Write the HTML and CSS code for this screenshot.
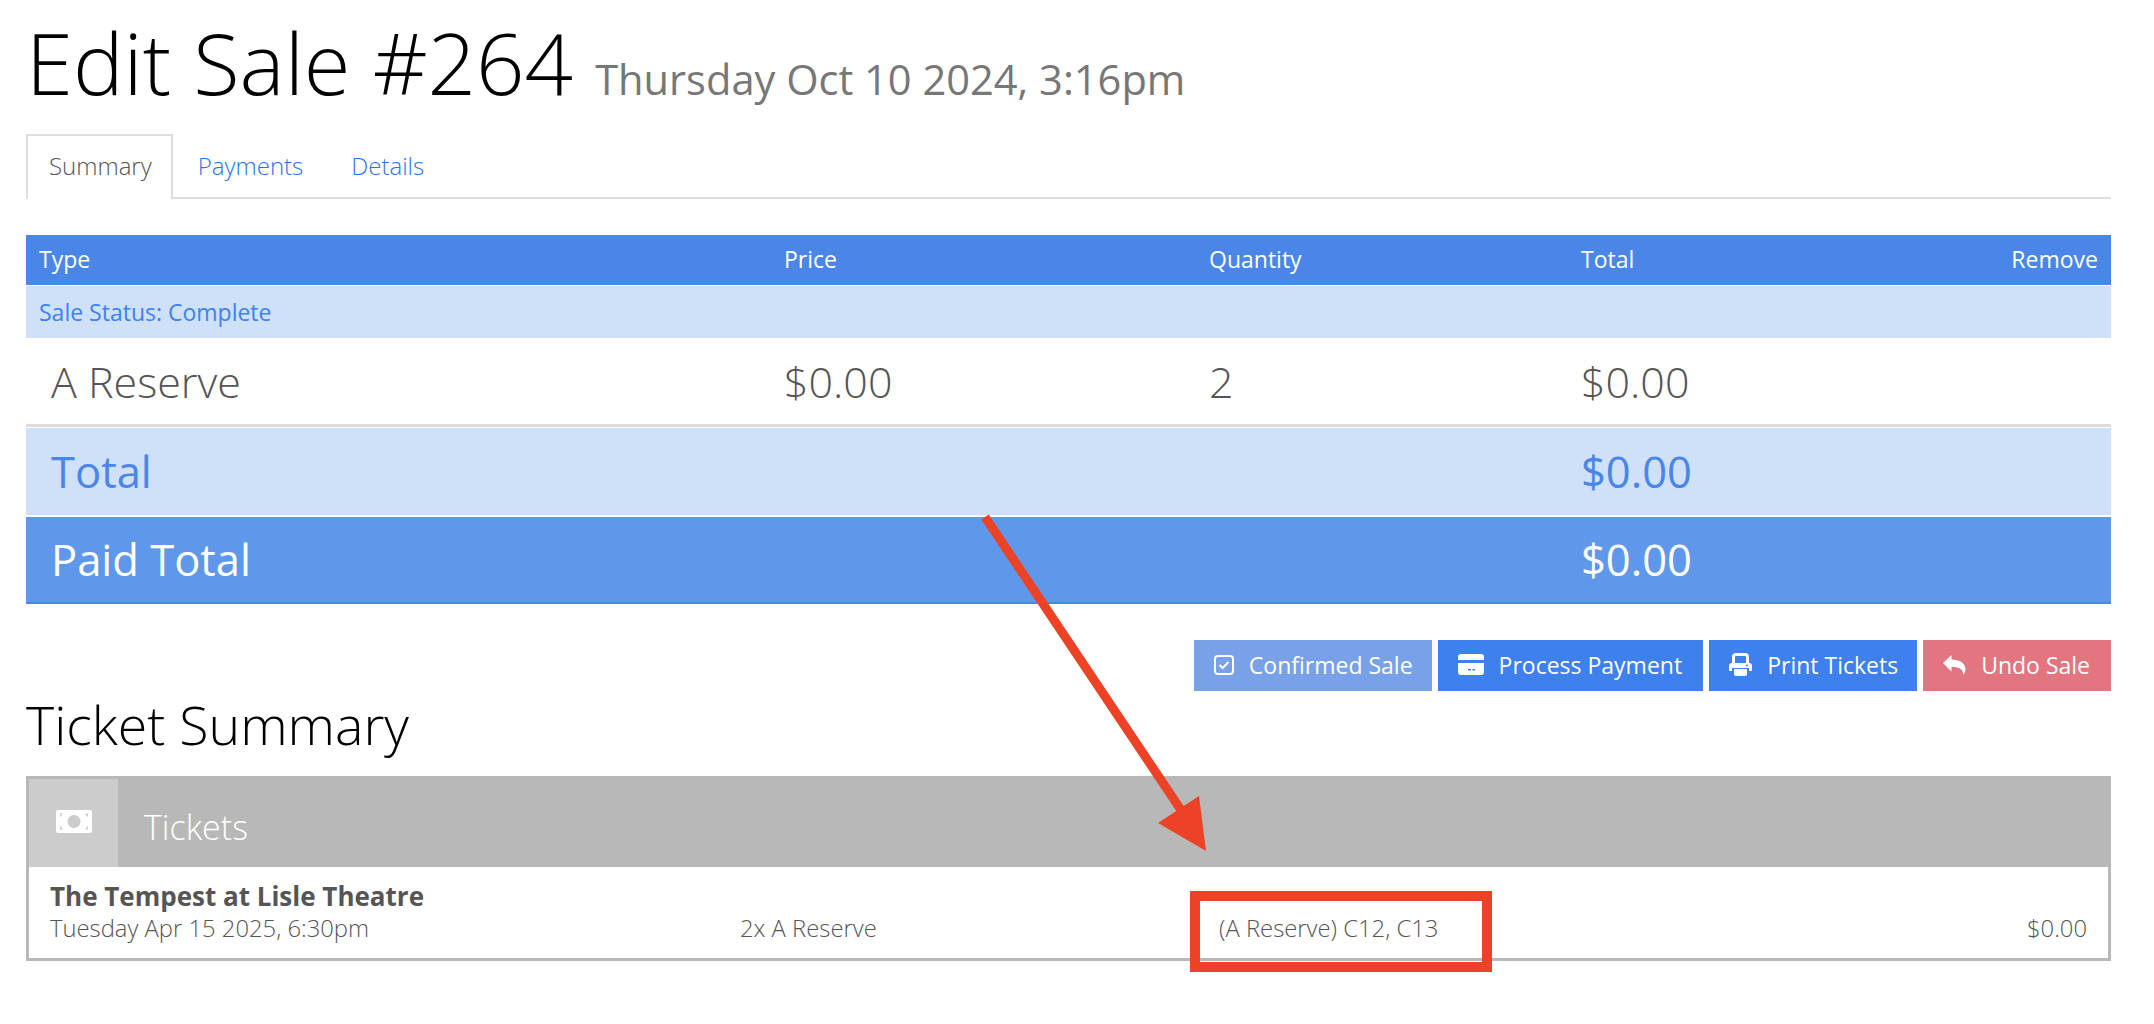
FILE: index.html
```html
<!DOCTYPE html>
<html lang="en">
<head>
    <meta charset="UTF-8">
    <title>Edit Sale #264</title>
    <link rel="stylesheet" href="styles.css">
</head>
<body>
    <div class="page">
        <h1>Edit Sale #264 <small>Thursday Oct 10 2024, 3:16pm</small></h1>

        <ul class="tabs">
            <li class="active"><a>Summary</a></li>
            <li><a>Payments</a></li>
            <li><a>Details</a></li>
        </ul>

        <table class="sale-table">
            <thead>
                <tr>
                    <th class="col-type">Type</th>
                    <th class="col-price">Price</th>
                    <th class="col-qty">Quantity</th>
                    <th class="col-total">Total</th>
                    <th class="col-remove">Remove</th>
                </tr>
            </thead>
            <tbody>
                <tr class="status-row"><td colspan="5">Sale Status: Complete</td></tr>
                <tr class="item-row">
                    <td class="first">A Reserve</td>
                    <td>$0.00</td>
                    <td>2</td>
                    <td>$0.00</td>
                    <td></td>
                </tr>
                <tr class="total-row">
                    <td class="first">Total</td>
                    <td></td>
                    <td></td>
                    <td>$0.00</td>
                    <td></td>
                </tr>
                <tr class="paid-row">
                    <td class="first">Paid Total</td>
                    <td></td>
                    <td></td>
                    <td>$0.00</td>
                    <td></td>
                </tr>
            </tbody>
        </table>

        <div class="actions">
            <a class="btn btn-confirmed">
                <svg class="btn-icon" width="20" height="20" viewBox="0 0 20 20"><rect x="1" y="1" width="18" height="18" rx="3" fill="none" stroke="#fff" stroke-width="2"/><path d="M5.500 10l3.200 3 5.800-6" fill="none" stroke="#fff" stroke-width="2"/></svg>
                Confirmed Sale
            </a>
            <a class="btn btn-primary">
                <svg class="btn-icon" width="26" height="21" viewBox="0 0 26 21"><path d="M3 0h20a3 3 0 0 1 3 3v3H0V3a3 3 0 0 1 3-3zM0 9h26v9a3 3 0 0 1-3 3H3a3 3 0 0 1-3-3zM10 15v1.500h3V15zm4.500 0v1.500H17V15z" fill="#fff" fill-rule="evenodd"/></svg>
                Process Payment
            </a>
            <a class="btn btn-primary btn-print">
                <svg class="btn-icon" width="23" height="23" viewBox="0 0 23 23"><path d="M3 10V4a4 4 0 0 1 4-4h9a4 4 0 0 1 4 4v6h-3V4a1 1 0 0 0-1-1H7a1 1 0 0 0-1 1v6zM3 10h17a3 3 0 0 1 3 3v4a1 1 0 0 1-1 1h-2v-3H3v3H1a1 1 0 0 1-1-1v-4a3 3 0 0 1 3-3zM5 16h13v5a2 2 0 0 1-2 2H7a2 2 0 0 1-2-2z" fill="#fff" fill-rule="evenodd"/><circle cx="18" cy="12.500" r="1" fill="#3d80ee"/></svg>
                Print Tickets
            </a>
            <a class="btn btn-undo">
                <svg class="btn-icon" width="23" height="20" viewBox="0 0 23 20"><path d="M0 8L8.500 0v4.500c8 .2 14 3.500 14 9.500 0 2.500-1 4.500-2.500 6 .8-5.500-3.500-8-11.500-8v4.500z" fill="#fff"/></svg>
                Undo Sale
            </a>
        </div>

        <h2>Ticket Summary</h2>

        <div class="panel">
            <div class="panel-head">
                <div class="panel-icon">
                    <svg width="36" height="23" viewBox="0 0 36 23"><path fill-rule="evenodd" fill="#fff" d="M2 0h32a2 2 0 0 1 2 2v19a2 2 0 0 1-2 2H2a2 2 0 0 1-2-2V2a2 2 0 0 1 2-2zm15 5a6.500 6.500 0 1 0 2 0zM4 3.500v4l3-4zm28 0h-3l3 4zM4 19.500h3l-3-4zm28 0v-4l-3 4z"/></svg>
                </div>
                <div class="panel-title">Tickets</div>
            </div>
            <div class="ticket-row">
                <div class="ticket-show">
                    <strong>The Tempest at Lisle Theatre</strong>
                    <span>Tuesday Apr 15 2025, 6:30pm</span>
                </div>
                <div class="ticket-qty">2x A Reserve</div>
                <div class="ticket-seats">(A Reserve) C12, C13</div>
                <div class="ticket-price">$0.00</div>
            </div>
        </div>
    </div>

    <!-- annotation drawn over the screenshot -->
    <svg class="annotation" width="2154" height="1024" viewBox="0 0 2154 1024">
        <path d="M985 517L1183 813" stroke="#ec4226" stroke-width="9" fill="none"/>
        <path d="M1199 796L1206 851L1158 823z" fill="#ec4226"/>
        <rect x="1195" y="896" width="292" height="71" fill="none" stroke="#ec4226" stroke-width="10"/>
    </svg>
</body>
</html>
```

FILE: styles.css
```css
body {
    font-family: "Open Sans", sans-serif;
    font-weight: 300;
    margin: 0;
    padding: 0;
    background-color: #fff;
    color: #555;
}

.page {
    width: 2085px;
    margin-left: 26px;
}

h1 {
    margin: 0;
    height: 134px;
    font-size: 85px;
    line-height: 124px;
    font-weight: 300;
    color: #000;
    white-space: nowrap;
}

h1 small {
    font-size: 41.600px;
    font-weight: 400;
    color: #777;
}

.tabs {
    list-style-type: none;
    margin: 0;
    padding: 0;
    height: 63px;
    display: flex;
    border-bottom: 2px solid #ddd;
}

.tabs li {
    height: 63px;
    box-sizing: border-box;
    padding: 0 22px;
    font-size: 24px;
    line-height: 64px;
    color: #2a73ec;
}

.tabs li:nth-child(2) {
    padding-left: 25px;
}

.tabs li:nth-child(3) {
    padding-left: 26px;
}

.tabs li.active {
    height: 65px;
    padding: 0 19px 0 21px;
    line-height: 59px;
    color: #555;
    background-color: #fff;
    border: 2px solid #ddd;
    border-bottom: none;
}

.sale-table {
    width: 100%;
    margin-top: 36px;
    border-collapse: separate;
    border-spacing: 0;
    table-layout: fixed;
}

.sale-table th {
    height: 50px;
    padding: 0 13px 2px;
    box-sizing: border-box;
    font-size: 23px;
    font-weight: 400;
    text-align: left;
    color: #fff;
    background-color: #4a86e8;
}

.col-type { width: 745px; }
.col-price { width: 425px; }
.col-qty { width: 372px; }
.col-total { width: 326px; }

.sale-table th.col-remove {
    text-align: right;
}

.sale-table td {
    padding: 0 13px;
    box-sizing: border-box;
}

.sale-table td.first {
    padding-left: 25px;
}

.status-row td {
    height: 53px;
    font-size: 23px;
    font-weight: 400;
    color: #3d82ee;
    background-color: #cfe0f9;
    border-top: 1px solid #fff;
}

.item-row td {
    height: 89px;
    font-size: 43px;
    border-bottom: 3px solid #ddd;
}

.total-row td {
    height: 90px;
    font-size: 43.500px;
    font-weight: 400;
    color: #4a86e8;
    background-color: #cfe0f9;
    border-top: 1px solid #fff;
    border-bottom: 2px solid #fff;
}

.paid-row td {
    height: 87px;
    font-size: 43.500px;
    font-weight: 400;
    color: #fff;
    background-color: #5f98ea;
    border-bottom: 2px solid #4a86e8;
}

.actions {
    display: flex;
    justify-content: flex-end;
    gap: 6px;
    margin-top: 36px;
}

.btn {
    height: 51px;
    box-sizing: border-box;
    display: flex;
    align-items: center;
    font-size: 23px;
    font-weight: 400;
    color: #fff;
    padding: 0 21px 2px 20px;
}

.btn-icon {
    margin-right: 15px;
}

.btn-confirmed {
    background-color: #79a1e8;
    padding-right: 19px;
}

.btn-primary { background-color: #3d80ee; }
.btn-undo { background-color: #e2757f; }

.btn-print {
    padding-right: 19px;
}

h2 {
    margin: 0;
    height: 85px;
    font-size: 53.700px;
    line-height: 68px;
    font-weight: 300;
    color: #000;
}

.panel {
    border: 3px solid #b8b8b8;
    border-top: none;
    height: 185px;
    box-sizing: border-box;
}

.panel-head {
    display: flex;
    height: 91px;
    background-color: #b8b8b8;
}

.panel-icon {
    width: 89px;
    height: 88px;
    margin-top: 3px;
    background-color: #ccc;
    display: flex;
    justify-content: center;
    padding-top: 31px;
    box-sizing: border-box;
}

.panel-title {
    margin-left: 26px;
    font-size: 34px;
    line-height: 102px;
    color: #fff;
}

.ticket-row {
    display: grid;
    grid-template-columns: 690px 479px 1fr 200px;
    align-items: end;
    padding: 13px 21px 0;
    font-size: 23.800px;
}

.ticket-show strong {
    display: block;
    font-size: 26px;
    line-height: 32px;
    font-weight: 700;
    color: #555;
}

.ticket-show span {
    display: block;
    line-height: 32px;
}

.ticket-qty,
.ticket-seats,
.ticket-price {
    line-height: 32px;
}

.ticket-price {
    text-align: right;
}

.annotation {
    position: absolute;
    top: 0;
    left: 0;
    pointer-events: none;
}
```
